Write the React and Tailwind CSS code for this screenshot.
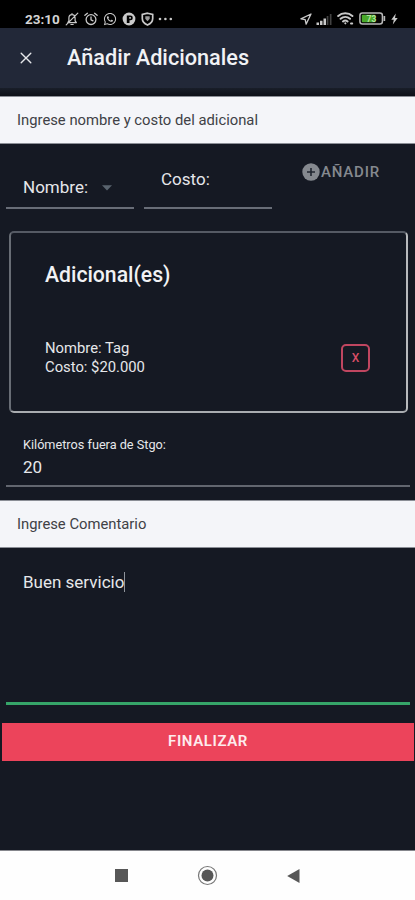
import { FaWhatsapp } from "react-icons/fa";

const stroke = { fill: "none", stroke: "currentColor", strokeLinecap: "round", strokeLinejoin: "round" };

function BellOff() {
  return (
    <svg className="h-[14px] w-[14px]" viewBox="0 0 14 14" {...stroke} strokeWidth="1.2">
      <path d="M2.8 10.6h8.6l-1.3-1.8V6c0-1.900-1.300-3.300-3.100-3.300S3.900 4.100 3.900 6v2.800zM5.900 12.500h2.300M7 2.700V1.500M1.200 12.800 12.800 1.200" />
    </svg>
  );
}

function Alarm() {
  return (
    <svg className="h-[14px] w-[14px]" viewBox="0 0 14 14" {...stroke} strokeWidth="1.3">
      <circle cx="7" cy="7.600" r="4.900" />
      <path d="M7 4.900v2.900l2 1M.900 3.300 3.400 1.300M13.100 3.300 10.600 1.300" />
    </svg>
  );
}

function Disc() {
  return (
    <svg className="h-[14px] w-[14px]" viewBox="0 0 14 14">
      <circle cx="7" cy="7" r="6.400" fill="currentColor" />
      <path d="M4.800 3.600h3.700a2.300 2.300 0 0 1 0 4.600H7.500v2.800H4.800z" fill="#000" />
      <path d="M7.300 5h1.500v1.800H7.300z" fill="currentColor" />
    </svg>
  );
}

function Shield() {
  return (
    <svg className="h-[14px] w-[13px]" viewBox="0 0 13 14" fill="none" stroke="currentColor">
      <path d="M6.500 1.200 11.700 2.500v4c0 3-2.200 5.200-5.200 6.500C3.500 11.700 1.300 9.500 1.300 6.500v-4z" strokeWidth="1.700" />
      <path d="M4.300 4.200h4.400v2.500l-2.200 2.600-2.200-2.600z" fill="#9a9a9a" stroke="none" />
    </svg>
  );
}

function StatusBar() {
  return (
    <div className="flex h-7 items-center bg-black pl-[25px] pr-[17px] pt-[9px] text-[#c9c9c9]">
      <span className="w-[35px] whitespace-nowrap text-[13.500px] font-bold leading-4 text-[#d4d4d4]">23:10</span>
      <div className="ml-[5px] flex items-center gap-[5px]">
        <BellOff />
        <Alarm />
        <FaWhatsapp className="h-[14px] w-[14px]" />
        <Disc />
        <Shield />
      </div>
      <svg className="ml-[4px] h-[4px] w-[15px]" viewBox="0 0 15 4" fill="currentColor">
        <circle cx="2" cy="2" r="1.300" />
        <circle cx="7.400" cy="2" r="1.300" />
        <circle cx="12.800" cy="2" r="1.300" />
      </svg>
      <div className="ml-auto flex items-center">
        <svg className="h-3 w-3" viewBox="0 0 12 12" {...stroke} strokeWidth="1.300">
          <path d="M11 1 .900 5.800l4.300.900.900 4.400z" />
        </svg>
        <svg className="ml-[4px] h-3 w-4" viewBox="0 0 16 12">
          <path d="M.500 9.500h2.500V12H.500zM4 7.800h2.500V12H4zM7.500 5.500H10V12H7.500z" fill="#c9c9c9" />
          <path d="M10.700 3h1.700v9h-1.700zM13.800 1h1.700v11h-1.700z" fill="#424242" />
        </svg>
        <svg className="ml-[5px] h-[13px] w-[17px]" viewBox="0 0 17 13" {...stroke} strokeWidth="2">
          <path d="M1.200 4c4-3.600 10.200-3.600 14.200 0M3.600 6.800c2.700-2.400 6.700-2.400 9.400 0M6 9.400c1.300-1.100 3.300-1.100 4.600 0" />
          <path d="m8.300 11.300.1.100M14 11.500h1.200" />
        </svg>
        <svg className="ml-[5px] h-[13px] w-[27px]" viewBox="0 0 27 13">
          <rect x=".900" y=".900" width="22.500" height="11.200" rx="2.500" fill="#050505" stroke="#b8b8b8" strokeWidth="1.500" />
          <rect x="2.800" y="2.800" width="13.500" height="7.400" rx="1" fill="#4aa92b" />
          <path d="M24.500 4h1.700v5h-1.700z" fill="#b8b8b8" />
          <text x="7.500" y="9.800" fontSize="8.500" fontWeight="700" fill="#b4e59d">73</text>
        </svg>
        <svg className="ml-[5px] h-3 w-[7px]" viewBox="0 0 7 12" fill="currentColor">
          <path d="M4.800.500.300 6.800h2.500L1.800 11.500 6.700 5H4z" />
        </svg>
      </div>
    </div>
  );
}

function Banner({ children }) {
  return (
    <div className="flex h-12 shrink-0 items-center border-y border-[#8b8e96] bg-[#f4f5f9] pl-[17px] text-[14.800px] text-[#404146]">
      {children}
    </div>
  );
}

export default function App() {
  return (
    <div
      className="flex h-[900px] w-[415px] flex-col overflow-hidden bg-[#151923] text-[#e6e7ea]"
      style={{ fontFamily: 'Roboto, "Liberation Sans", sans-serif' }}
    >
      <StatusBar />
      <header className="flex h-[60px] items-center bg-[#222838] pl-5">
        <svg className="h-3 w-3" viewBox="0 0 12 12" {...stroke} strokeWidth="1.400">
          <path d="m1.200 1.200 9.600 9.600M10.800 1.200l-9.600 9.600" />
        </svg>
        <h1 className="ml-[35px] mt-px whitespace-nowrap text-[21.700px] font-medium text-[#f1f2f5]">Añadir Adicionales</h1>
      </header>
      <div className="h-2 bg-gradient-to-b from-[#191e29] to-[#0d1018]" />
      <Banner>
        <span className="whitespace-nowrap">Ingrese nombre y costo del adicional</span>
      </Banner>

      <div className="flex h-[65px] shrink-0 gap-[10px] pl-[6px]">
        <div className="flex w-32 border-b-2 border-[#686d77] pl-[17px] pt-[32px]">
          <span className="w-[66px] whitespace-nowrap text-[17px] leading-[22px]">Nombre:</span>
          <svg className="ml-[13px] mt-[9px] h-[6px] w-[10px]" viewBox="0 0 10 6">
            <path d="M0 .300h10L5 5.500z" fill="#59636e" />
          </svg>
        </div>
        <div className="w-32 border-b-2 border-[#686d77] pl-[17px] pt-[24px] text-[17px] leading-[22px]">Costo:</div>
        <div className="ml-[20px] mt-[18px] flex h-5 items-center text-[#85898f]">
          <svg className="h-[18px] w-[18px]" viewBox="0 0 18 18">
            <circle cx="9" cy="9" r="8.700" fill="#85898f" />
            <path d="M9 5v8M5 9h8" stroke="#202630" strokeWidth="1.600" />
          </svg>
          <span className="ml-px whitespace-nowrap text-[15px] font-medium leading-5 tracking-[0.800px]">AÑADIR</span>
        </div>
      </div>

      <section className="ml-[9px] mt-[22px] h-[182px] w-[399px] shrink-0 rounded-[5px] border-2 border-b-[#a9acb0] border-l-[#686d75] border-r-[#b8babd] border-t-[#555a64] pl-[34px]">
        <h2 className="mt-[30px] whitespace-nowrap text-[21.200px] font-medium leading-6 text-[#f1f2f4]">Adicional(es)</h2>
        <div className="mt-[51px] flex h-[40px] items-center justify-between pr-[36px]">
          <div className="whitespace-nowrap text-[14.800px] leading-[19px]">
            <p>Nombre: Tag</p>
            <p>Costo: $20.000</p>
          </div>
          <button className="flex h-[28px] w-[29px] items-center justify-center rounded-[5px] border-2 border-[#c04660] pb-px text-[12px] font-medium text-[#d84d65]">X</button>
        </div>
      </section>

      <div className="ml-[6px] mt-[22px] h-[52px] w-[404px] shrink-0 border-b-2 border-[#62666f] pl-[17px]">
        <p className="pt-px whitespace-nowrap text-[12.700px] leading-[18px]">Kilómetros fuera de Stgo:</p>
        <p className="mt-[2px] text-[17px] leading-[22px]">20</p>
      </div>

      <div className="mt-[13px] shrink-0">
        <Banner>
          <span className="whitespace-nowrap">Ingrese Comentario</span>
        </Banner>
      </div>
      <div className="ml-[6px] flex h-[157px] w-[404px] shrink-0 border-b-[3px] border-[#36a569] pl-[17px] pt-[23px]">
        <span className="whitespace-nowrap text-[17px] leading-[22px]">Buen servicio</span>
        <span className="mt-px h-[20px] w-px bg-[#8f949b]" />
      </div>
      <button className="ml-[2px] mt-[18px] h-[38px] w-[412px] shrink-0 bg-[#ec445b] pb-px text-[15px] font-semibold tracking-[0.600px] text-[#fdecee]">
        FINALIZAR
      </button>

      <nav className="mt-auto flex h-[50px] shrink-0 items-center border-t border-[#85868c] bg-[#fefefe] pl-[115px]">
        <div className="h-[13px] w-[13px] bg-[#575757]" />
        <svg className="ml-[69px] h-[21px] w-[21px]" viewBox="0 0 21 21">
          <circle cx="10.500" cy="10.500" r="9" fill="none" stroke="#777" strokeWidth="1.200" />
          <circle cx="10.500" cy="10.500" r="6" fill="#575757" />
        </svg>
        <svg className="ml-[69px] h-[14px] w-[13px]" viewBox="0 0 13 14">
          <path d="M12.500 0v14L.200 7z" fill="#575757" />
        </svg>
      </nav>
    </div>
  );
}
